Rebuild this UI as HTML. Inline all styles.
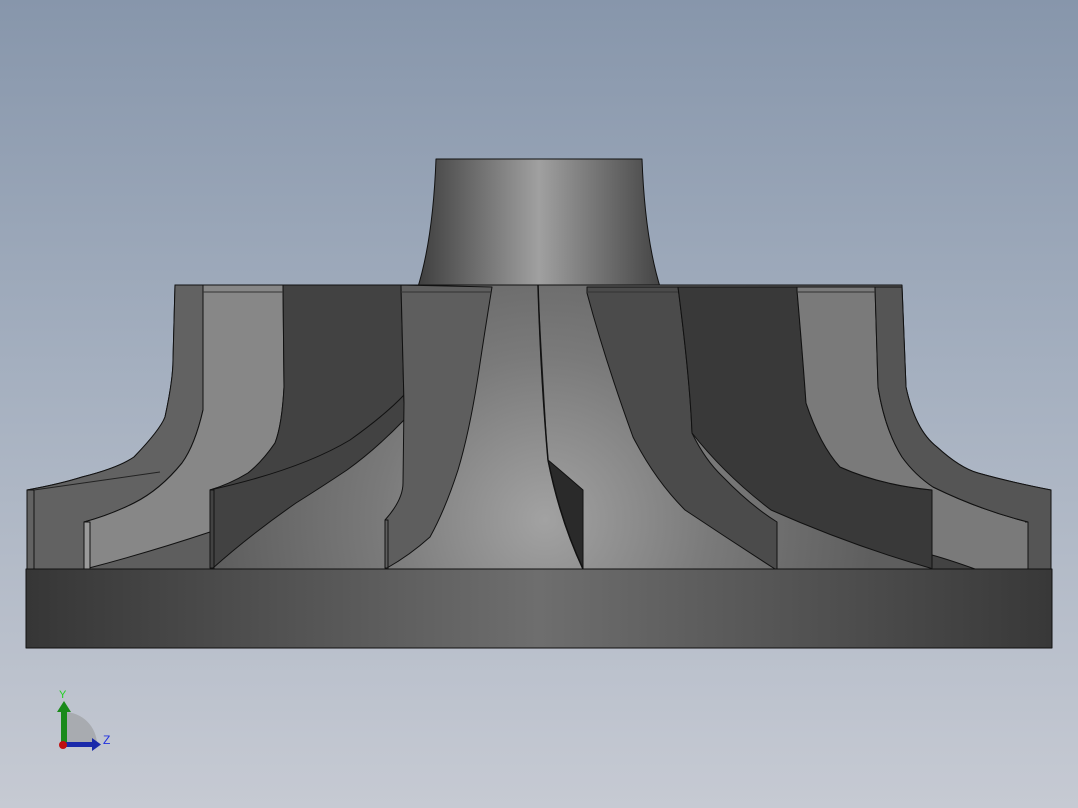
<!DOCTYPE html>
<html><head><meta charset="utf-8"><style>
html,body{margin:0;padding:0;width:1078px;height:808px;overflow:hidden}
body{background:linear-gradient(to bottom,#8796ab 0%,#a4afbf 45%,#c6cad3 100%)}
svg{position:absolute;left:0;top:0}
</style></head><body>
<svg width="1078" height="808" viewBox="0 0 1078 808" xmlns="http://www.w3.org/2000/svg">
<defs>
<linearGradient id="hub" x1="0" x2="1" y1="0" y2="0">
<stop offset="0" stop-color="#3e3e3e"/><stop offset="0.5" stop-color="#a0a0a0"/><stop offset="1" stop-color="#444"/>
</linearGradient>
<radialGradient id="floor" cx="545" cy="520" r="330" gradientUnits="userSpaceOnUse">
<stop offset="0" stop-color="#a2a2a2"/><stop offset="0.5" stop-color="#7a7a7a"/><stop offset="1" stop-color="#5e5e5e"/>
</radialGradient>
<linearGradient id="base" x1="0" x2="1" y1="0" y2="0">
<stop offset="0" stop-color="#363636"/><stop offset="0.5" stop-color="#6e6e6e"/><stop offset="1" stop-color="#383838"/>
</linearGradient>
</defs>
<g stroke="#111" stroke-width="1" stroke-linejoin="round">
<!-- hub neck -->
<path d="M436,159 L642,159 Q645,240 661,290 L417,290 Q433,240 436,159 Z" fill="url(#hub)"/>
<!-- floor silhouette -->
<path d="M175,285 L902,285 Q906,387 906,387 Q915,430 937,447 Q960,468 978,473 Q1010,482 1051,490 L1051,569 L27,569 L27,490 Q60,484 82,477 Q118,468 134,457 Q160,430 165,417 Q173,380 173,360 Z" fill="url(#floor)"/>
<!-- left outer blade D' -->
<path d="M175,285 L203,285 L203,410 Q195,445 182,463 Q160,490 134,503 Q110,515 84,522 L84,569 L27,569 L27,490 Q60,484 82,477 Q118,468 134,457 Q160,430 165,417 Q173,380 173,360 Z" fill="#626262"/>
<path d="M27,490 L34,490 L34,569" fill="none"/>
<path d="M34,490 L160,472" fill="none" stroke="#222"/>
<!-- light blade C' -->
<path d="M203,285 L283,285 L284,387 Q282,425 275,443 Q262,462 248,473 Q230,484 210,490 L210,532 Q150,552 89,568 L89,522 L84,522 Q110,515 134,503 Q160,490 182,463 Q195,445 203,410 Z" fill="#878787"/>
<path d="M84,522 L90,522 L90,569 L84,569 Z" fill="#9a9a9a"/>
<!-- dark blade B' -->
<path d="M283,285 L401,285 L404,403 L404,420 Q375,450 347,470 Q320,488 296,503 Q250,535 213,568 L210,568 L210,490 Q230,484 248,473 Q262,462 275,443 Q282,425 284,387 Z" fill="#424242"/>
<path d="M210,490 Q300,470 350,440 Q385,415 404,395" fill="none"/>
<path d="M210,490 L214,490 L214,569" fill="none"/>
<!-- blade A' -->
<path d="M401,285 L492,287 Q485,330 479,370 Q470,430 458,470 Q445,510 430,537 Q410,555 387,568 L385,568 L385,520 Q403,500 403,483 L404,403 Z" fill="#5e5e5e"/>
<path d="M385,520 L388,520 L388,569" fill="none"/>
<!-- thin center blade -->
<path d="M538,285 Q541,380 548,460 Q560,520 583,569 L583,490 Q560,470 548,460" fill="#2a2a2a"/>
<path d="M538,285 Q541,380 548,460 Q560,520 583,569" fill="none" stroke-width="1.5"/>
<!-- blade A -->
<path d="M587,287 L678,287 Q690,380 692,433 Q705,460 723,477 Q750,505 777,522 L777,569 L775,569 Q730,540 685,510 Q655,480 633,437 Q605,360 587,293 Z" fill="#4b4b4b"/>
<!-- blade B -->
<path d="M678,287 L797,287 L797,290 Q803,360 806,403 Q820,445 840,467 Q880,485 932,490 L932,569 L930,568 Q850,545 771,510 Q725,475 692,433 Q690,380 678,287 Z" fill="#393939"/>
<path d="M932,490 L932,569" fill="none"/>
<!-- blade C -->
<path d="M797,287 L875,287 L878,387 Q885,430 902,457 Q915,475 933,487 Q980,510 1028,522 L1028,569 L932,569 L932,490 Q880,485 840,467 Q820,445 806,403 Q803,360 797,290 Z" fill="#7a7a7a"/>
<path d="M932,490 L932,569 L975,569 Q950,560 932,555" fill="#434343"/>
<path d="M1025,522 L1028,522 L1028,569" fill="none"/>
<!-- blade D -->
<path d="M875,287 L902,287 Q906,387 906,387 Q915,430 937,447 Q960,468 978,473 Q1010,482 1051,490 L1051,569 L1028,569 L1028,522 Q980,510 933,487 Q915,475 902,457 Q885,430 878,387 Z" fill="#555"/>
<!-- top caps -->
<path d="M175,285 L902,285" fill="none"/>
<path d="M203,292 L283,292 M587,292 L678,292 M797,292 L875,292 M401,292 L491,292" fill="none" stroke="#333"/>
<!-- base -->
<rect x="26" y="569" width="1026" height="79" fill="url(#base)"/>
</g>
<!-- triad -->
<g>
<path d="M64,745 L64,712 A33,33 0 0 1 97,745 Z" fill="#a8abb0"/>
<rect x="61" y="708" width="6" height="38" fill="#1a8a1a"/>
<polygon points="57,712 64,701 71,712" fill="#1a8a1a"/>
<rect x="62" y="742" width="30" height="5" fill="#1a2aaa"/>
<polygon points="92,738 101,744.5 92,751" fill="#1a2aaa"/>
<circle cx="63" cy="745" r="4" fill="#c01010"/>
<text x="59" y="698" font-family="Liberation Sans, sans-serif" font-size="11" fill="#20d020">Y</text>
<text x="103" y="744" font-family="Liberation Sans, sans-serif" font-size="12" fill="#2030e0">Z</text>
</g>
</svg>
</body></html>
